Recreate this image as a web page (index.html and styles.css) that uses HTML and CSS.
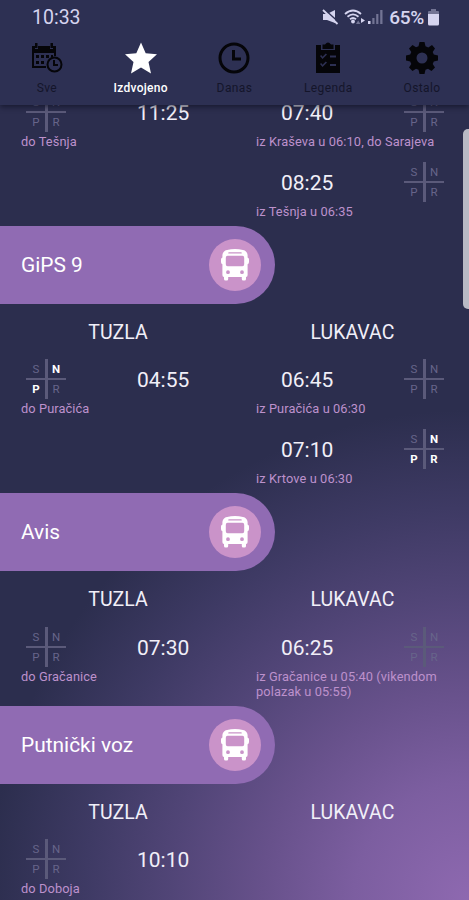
FILE: index.html
```
<!DOCTYPE html>
<html lang="bs">
<head>
<meta charset="utf-8">
<title>Izdvojeno</title>
<link rel="stylesheet" href="styles.css">
</head>
<body>
<svg class="defs" aria-hidden="true">
  <symbol id="bus" viewBox="0 0 28 32">
    <path fill-rule="evenodd" d="M6 1Q14-.8 22 1Q26 1.800 26.600 6V8.500Q28 8.800 28 10.500V13Q28 15 26.600 15.300V26Q26.600 28 25 28V30Q25 31.500 23.500 31.500H22.300Q20.800 31.500 20.800 30V28H7.200V30Q7.200 31.500 5.700 31.500H4.500Q3 31.500 3 30V28Q1.400 28 1.400 26V15.300Q0 15 0 13V10.500Q0 8.800 1.400 8.500V6Q2 1.800 6 1ZM8 3.300Q7.200 3.400 7.200 4T8 4.600H20Q20.800 4.600 20.800 4T20 3.300ZM6.600 6.800Q4.800 6.800 4.800 8.800V15.300Q4.800 17.300 6.600 17.300H21.400Q23.200 17.300 23.200 15.300V8.800Q23.200 6.800 21.400 6.800ZM7 21.300A1.900 1.900 0 1 0 7 25.100A1.900 1.900 0 1 0 7 21.300ZM21 21.300A1.900 1.900 0 1 0 21 25.100A1.900 1.900 0 1 0 21 21.300Z"/>
  </symbol>
</svg>
<div class="screen">
  <header class="top">
    <div class="status">
      <span class="clock">10:33</span>
      <div class="indicators">
        <svg class="mute" viewBox="0 0 17 16"><path d="M1 5H5L13 1V14L5 11H1Z"/><path class="gap" d="M2 0L17 13.500"/><path class="slash" d="M1 1L15.500 15"/></svg>
        <svg class="wifi" viewBox="0 0 22 16"><path class="arc" d="M1 5Q9-2 17 5M3.500 7.800Q9 3 14.500 7.800M6 10.300Q9 7.700 12 10.300"/><circle cx="9" cy="12.500" r="1.900"/><path class="weak" d="M12 15L14.200 11.500L16.500 15Z"/><path d="M17 9L21 11.500L17 14Z"/></svg>
        <svg class="signal" viewBox="0 0 15 16"><path d="M0 12H2.500V15H0Z"/><path class="weak" d="M4.300 9H6.500V15H4.300ZM8.200 5H10.400V15H8.200ZM12.200 1H14.500V15H12.200Z"/></svg>
        <span class="percent">65%</span>
        <svg class="battery" viewBox="0 0 11 17"><path class="weak" d="M3 0H8V2H10Q11 2 11 3V5H0V3Q0 2 1 2H3Z"/><path d="M0 5H11V15Q11 16.500 9.500 16.500H1.500Q0 16.500 0 15Z"/></svg>
      </div>
    </div>
    <nav class="tabs">
      <a class="tab">
        <svg viewBox="0 0 32 32"><path fill-rule="evenodd" d="M1 4H4V7H7V4H19V7H22V4H25V14H23V11H3V24H15V26H1Z"/><path d="M7 4H19V9H7Z"/><path d="M4 1H6.500V6H4ZM19.500 1H22V6H19.500ZM5 13H8V16H5ZM10 13H13V16H10ZM15 13H18V16H15ZM20 13H22V15H20ZM5 19H8V22H5ZM10 19H13V22H10Z"/><circle class="line" cx="23.500" cy="22.500" r="7"/><path class="line" d="M23 18V23H27"/></svg>
        <span>Sve</span>
      </a>
      <a class="tab active">
        <svg viewBox="0 0 32 32"><path d="M16 .5L20.700 11.200L32 12.300L23.500 20L26 31.500L16 25.500L6 31.500L8.500 20L0 12.300L11.300 11.200Z"/></svg>
        <span>Izdvojeno</span>
      </a>
      <a class="tab">
        <svg viewBox="0 0 32 32"><circle class="ring" cx="16" cy="16" r="14"/><path class="ring" d="M15.500 8V17H23"/></svg>
        <span>Danas</span>
      </a>
      <a class="tab">
        <svg viewBox="0 0 32 32"><path fill-rule="evenodd" d="M4 3H9V8H23V3H28V31H4ZM8 14L10.500 17L15 12.500L13.800 11.500L10.500 14.700L9.200 13ZM8 22L10.500 25L15 20.500L13.800 19.500L10.500 22.700L9.200 21ZM18 13.500V15.500H24V13.500ZM18 22V24H24V22Z"/><path d="M10.500 2.500H13Q16-1.500 19 2.500H21.500V7H10.500Z"/></svg>
        <span>Legenda</span>
      </a>
      <a class="tab">
        <svg viewBox="0 0 32 32"><path fill-rule="evenodd" d="M13.500 0H18.500L19.500 4.300L22.300 5.500L26 3L29 6.500L26.700 10L27.800 12.500L32 13.500V18.500L27.800 19.500L26.700 22L29 25.500L25.500 29L22 26.700L19.500 27.800L18.500 32H13.500L12.500 27.800L10 26.700L6.500 29L3 25.500L5.300 22L4.200 19.500L0 18.500V13.500L4.200 12.500L5.300 10L3 6.500L6.500 3L10 5.300L12.500 4.200ZM16 10.500A5.500 5.500 0 1 0 16 21.500A5.500 5.500 0 1 0 16 10.500Z"/></svg>
        <span>Ostalo</span>
      </a>
    </nav>
  </header>

  <main class="list">
    <section class="columns scrolled">
      <div class="column from">
        <article class="departure">
          <div class="line-up"><div class="days"><b>S</b><b>N</b><b>P</b><b>R</b></div><time>11:25</time></div>
          <p>do Tešnja</p>
        </article>
      </div>
      <div class="column to">
        <article class="departure">
          <div class="line-up"><time>07:40</time><div class="days"><b>S</b><b>N</b><b>P</b><b>R</b></div></div>
          <p>iz Kraševa u 06:10, do Sarajeva</p>
        </article>
        <article class="departure">
          <div class="line-up"><time>08:25</time><div class="days"><b>S</b><b>N</b><b>P</b><b>R</b></div></div>
          <p>iz Tešnja u 06:35</p>
        </article>
      </div>
    </section>

    <h2 class="carrier"><span>GiPS 9</span><i class="badge"><svg><use href="#bus"/></svg></i></h2>
    <section class="columns">
      <div class="column from">
        <h3>TUZLA</h3>
        <article class="departure">
          <div class="line-up"><div class="days"><b>S</b><b class="on">N</b><b class="on">P</b><b>R</b></div><time>04:55</time></div>
          <p>do Puračića</p>
        </article>
      </div>
      <div class="column to">
        <h3>LUKAVAC</h3>
        <article class="departure">
          <div class="line-up"><time>06:45</time><div class="days"><b>S</b><b>N</b><b>P</b><b>R</b></div></div>
          <p>iz Puračića u 06:30</p>
        </article>
        <article class="departure">
          <div class="line-up"><time>07:10</time><div class="days"><b>S</b><b class="on">N</b><b class="on">P</b><b class="on">R</b></div></div>
          <p>iz Krtove u 06:30</p>
        </article>
      </div>
    </section>

    <h2 class="carrier"><span>Avis</span><i class="badge"><svg><use href="#bus"/></svg></i></h2>
    <section class="columns">
      <div class="column from">
        <h3>TUZLA</h3>
        <article class="departure">
          <div class="line-up"><div class="days"><b>S</b><b>N</b><b>P</b><b>R</b></div><time>07:30</time></div>
          <p>do Gračanice</p>
        </article>
      </div>
      <div class="column to">
        <h3>LUKAVAC</h3>
        <article class="departure">
          <div class="line-up"><time>06:25</time><div class="days"><b>S</b><b>N</b><b>P</b><b>R</b></div></div>
          <p>iz Gračanice u 05:40 (vikendom polazak u 05:55)</p>
        </article>
      </div>
    </section>

    <h2 class="carrier"><span>Putnički voz</span><i class="badge"><svg><use href="#bus"/></svg></i></h2>
    <section class="columns">
      <div class="column from">
        <h3>TUZLA</h3>
        <article class="departure">
          <div class="line-up"><div class="days"><b>S</b><b>N</b><b>P</b><b>R</b></div><time>10:10</time></div>
          <p>do Doboja</p>
        </article>
      </div>
      <div class="column to">
        <h3>LUKAVAC</h3>
      </div>
    </section>
  </main>
  <div class="edge-handle"></div>
</div>
</body>
</html>
```
FILE: styles.css
```
* { box-sizing: border-box; }
body, h2, h3, p { margin: 0; }
body { font-family: Roboto, "Noto Sans", sans-serif; color: #f1eff8; }
.defs { display: none; }
svg { display: block; fill: currentColor; }

.screen {
  position: relative;
  display: flex;
  flex-direction: column;
  width: 469px;
  height: 900px;
  overflow: hidden;
  background:
    radial-gradient(ellipse 480px 490px at 100% 100%, #8e69b0 0%, #7c5ea0 24%, #67518b 43%, #514577 62%, #3e3a64 80%, #2c2e4e 100%);
}

/* Status bar and tabs */
.top {
  z-index: 1;
  flex: none;
  height: 105px;
  background: #2d3053;
  box-shadow: 0 2px 5px rgba(14, 15, 34, .65);
}
.status {
  display: flex;
  justify-content: space-between;
  align-items: center;
  height: 34px;
  padding: 0 30px 0 32px;
  color: #d5d4ef;
}
.clock { font-size: 19.500px; }
.indicators { display: flex; align-items: center; }
.mute { width: 17px; height: 16px; }
.slash { stroke: currentColor; stroke-width: 1.800; }
.gap { stroke: #2d3053; stroke-width: 1.500; }
.wifi { width: 22px; height: 16px; margin-left: 5px; }
.arc { fill: none; stroke: currentColor; stroke-width: 1.800; }
.signal { width: 15px; height: 16px; margin-left: 2px; }
.weak { opacity: .42; }
.percent { margin-left: 6px; font-size: 19px; font-weight: 500; letter-spacing: -.3px; }
.battery { width: 11px; height: 17px; margin-left: 4px; }

.tabs { display: grid; grid-template-columns: repeat(5, 1fr); height: 71px; padding-top: 8px; }
.tab { display: flex; flex-direction: column; align-items: center; color: #050509; }
.tab svg { width: 32px; height: 32px; }
.tab span { margin-top: 6px; font-size: 12px; line-height: 16px; letter-spacing: .4px; color: #14152a; }
.tab.active { color: #fff; }
.tab.active span { color: #fff; font-weight: 500; letter-spacing: .3px; }
.line { fill: none; stroke: currentColor; stroke-width: 2; }
.ring { fill: none; stroke: currentColor; stroke-width: 3; }

/* Timetable */
.list { flex: 1; min-height: 0; overflow: hidden; }
.columns { display: grid; grid-template-columns: 236px 233px; padding-bottom: 7px; }
.scrolled { margin-top: -14px; }
.column h3 {
  height: 54.500px;
  padding-top: 15px;
  font-size: 19.500px;
  font-weight: 400;
  line-height: 28px;
  text-align: center;
}
.departure + .departure { margin-top: 12.500px; }
.line-up { display: flex; align-items: center; height: 42px; }
.line-up time { padding-top: 2px; font-size: 21px; line-height: 24px; }
.from .line-up { padding-left: 26px; gap: 71px; }
.to .line-up { justify-content: space-between; padding: 0 25px 0 45px; }
.departure p {
  margin-bottom: -1px;
  padding: 1px 0 0 21px;
  font-size: 12.800px;
  line-height: 15.500px;
  letter-spacing: .1px;
  color: #bd91cc;
}
.to .departure p { padding-left: 20px; padding-right: 20px; }

.days {
  display: grid;
  grid-template-columns: 20px 20px;
  grid-template-rows: 20px 20px;
  width: 40px;
  height: 40px;
  background:
    linear-gradient(#5b5a7a, #5b5a7a) center / 3px 100% no-repeat,
    linear-gradient(#5b5a7a, #5b5a7a) center / 100% 2px no-repeat;
}
.days b { font-size: 11.500px; font-weight: 400; line-height: 21px; text-align: center; color: #67658a; }
.days .on { font-weight: 700; color: #fff; }

.carrier {
  display: flex;
  justify-content: space-between;
  align-items: center;
  width: 275px;
  height: 78.300px;
  padding: 0 14px 0 21px;
  border-radius: 0 40px 40px 0;
  background: #906bb3;
  color: #fff;
  font-size: 20.900px;
  font-weight: 400;
}
.badge { display: grid; place-items: center; width: 52px; height: 52px; border-radius: 50%; background: #ca93c9; }
.badge svg { width: 28px; height: 32px; }

.edge-handle {
  position: absolute;
  top: 129px;
  right: -4px;
  width: 10px;
  height: 180px;
  border-radius: 6px;
  background: #b9bac5;
}
```
